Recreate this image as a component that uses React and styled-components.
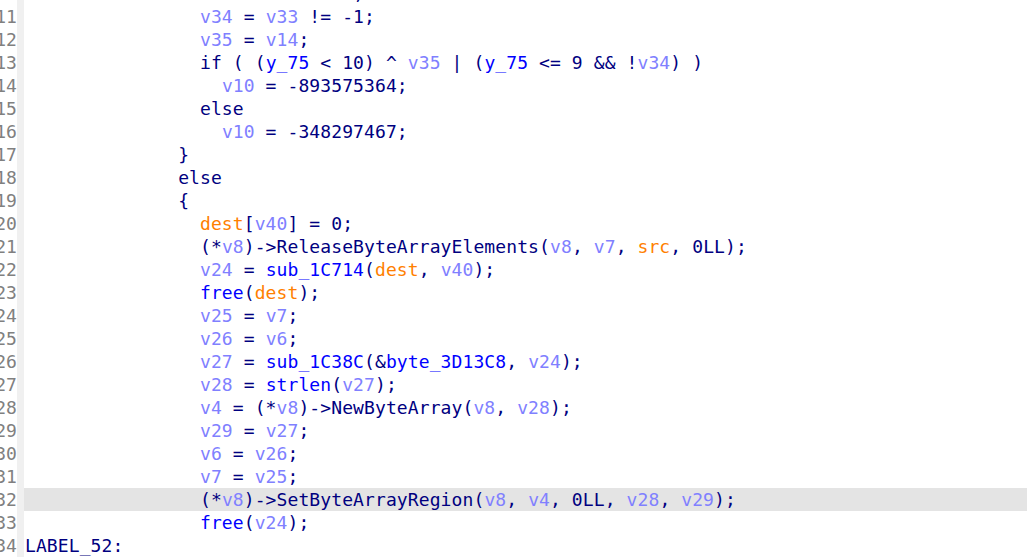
import styled, { createGlobalStyle } from 'styled-components';

const GlobalStyle = createGlobalStyle`
  html, body {
    margin: 0;
    padding: 0;
    background: #ffffff;
    overflow: hidden;
  }
`;

const code = [
  [10, 16, 'v33 = v12 - v9;'],
  [11, 16, 'v34 = v33 != -1;'],
  [12, 16, 'v35 = v14;'],
  [13, 16, 'if ( (y_75 < 10) ^ v35 | (y_75 <= 9 && !v34) )'],
  [14, 18, 'v10 = -893575364;'],
  [15, 16, 'else'],
  [16, 18, 'v10 = -348297467;'],
  [17, 14, '}'],
  [18, 14, 'else'],
  [19, 14, '{'],
  [20, 16, 'dest[v40] = 0;'],
  [21, 16, '(*v8)->ReleaseByteArrayElements(v8, v7, src, 0LL);'],
  [22, 16, 'v24 = sub_1C714(dest, v40);'],
  [23, 16, 'free(dest);'],
  [24, 16, 'v25 = v7;'],
  [25, 16, 'v26 = v6;'],
  [26, 16, 'v27 = sub_1C38C(&byte_3D13C8, v24);'],
  [27, 16, 'v28 = strlen(v27);'],
  [28, 16, 'v4 = (*v8)->NewByteArray(v8, v28);'],
  [29, 16, 'v29 = v27;'],
  [30, 16, 'v6 = v26;'],
  [31, 16, 'v7 = v25;'],
  [32, 16, '(*v8)->SetByteArrayRegion(v8, v4, 0LL, v28, v29);'],
  [33, 16, 'free(v24);'],
  [34, 0, 'LABEL_52:'],
];

const CURRENT = 32;
const orange = ['dest', 'src'];
const blue = ['y_75', 'free', 'strlen', 'sub_1C714', 'sub_1C38C', 'byte_3D13C8'];

function kindOf(word) {
  if (/^v\d+$/.test(word)) return 'var';
  if (orange.includes(word)) return 'arg';
  if (blue.includes(word)) return 'name';
  return 'plain';
}

function tokenize(text) {
  return text
    .split(/([A-Za-z_][A-Za-z0-9_]*)/)
    .filter(Boolean)
    .map((part) => ({ text: part, kind: /^[A-Za-z_]/.test(part) ? kindOf(part) : 'plain' }));
}

export default function App() {
  return (
    <>
      <GlobalStyle />
      <Editor>
        {code.map(([num, indent, text]) => (
          <Row key={num}>
            <LineNo>{num}</LineNo>
            <Stripe />
            <Code $current={num === CURRENT}>
              {' '.repeat(indent)}
              {tokenize(text).map((t, i) => (
                <Tok key={i} $kind={t.kind}>{t.text}</Tok>
              ))}
            </Code>
          </Row>
        ))}
      </Editor>
    </>
  );
}

const colors = {
  plain: '#000080',
  var: '#8080ff',
  arg: '#ff8000',
  name: '#0000ff',
};

const Editor = styled.div`
  display: flex;
  flex-direction: column;
  margin-top: -18px;
  width: 1027px;
  font-family: "DejaVu Sans Mono", "Liberation Mono", monospace;
  font-size: 18px;
  letter-spacing: 0.1px;
`;

const Row = styled.div`
  display: flex;
  height: 23px;
  line-height: 23px;
`;

const LineNo = styled.div`
  width: 17px;
  flex-shrink: 0;
  display: flex;
  justify-content: flex-end;
  overflow: hidden;
  color: #808080;
  background: #ffffff;
`;

const Stripe = styled.div`
  width: 7px;
  flex-shrink: 0;
  background: #f0f0f0;
`;

const Code = styled.div`
  flex: 1;
  padding-left: 1px;
  white-space: pre;
  color: #000080;
  background: ${(p) => (p.$current ? '#e4e4e4' : '#ffffff')};
`;

const Tok = styled.span`
  color: ${(p) => colors[p.$kind]};
`;
